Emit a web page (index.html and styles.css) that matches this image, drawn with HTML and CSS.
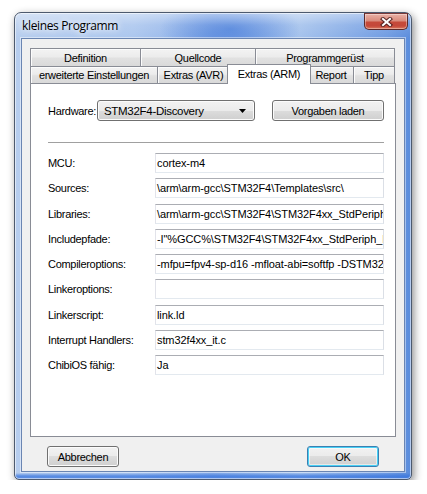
FILE: index.html
```html
<!DOCTYPE html>
<html lang="de">
<head>
<meta charset="utf-8">
<title>kleines Programm</title>
<link rel="stylesheet" href="styles.css">
</head>
<body>
<div class="window">
  <div class="titlebar">
    <span class="title">kleines Programm</span>
    <button class="close" aria-label="Schließen">
      <svg width="13" height="10" viewBox="0 0 13 10">
        <path d="M3 2 L10 8 M10 2 L3 8" stroke="#4a1c1c" stroke-width="4.2" stroke-linecap="square" fill="none" opacity="0.85"/>
        <path d="M3 2 L10 8 M10 2 L3 8" stroke="#fff" stroke-width="2" stroke-linecap="square" fill="none"/>
      </svg>
    </button>
  </div>

  <div class="client">
    <div class="tabctl">
      <div class="tabrow row1">
        <div class="tab t-def">Definition</div>
        <div class="tab t-src">Quellcode</div>
        <div class="tab t-prog">Programmgerüst</div>
      </div>
      <div class="tabrow row2">
        <div class="tab t-ext">erweiterte Einstellungen</div>
        <div class="tab t-avr">Extras (AVR)</div>
        <div class="tab t-arm active">Extras (ARM)</div>
        <div class="tab t-rep">Report</div>
        <div class="tab t-tip">Tipp</div>
      </div>

      <div class="panel">
        <div class="hwrow">
          <span class="hwlabel">Hardware:</span>
          <div class="combo">
            <span>STM32F4-Discovery</span>
            <svg width="7" height="4" viewBox="0 0 7 4"><polygon points="0,0 7,0 3.5,4" fill="#000"/></svg>
          </div>
          <button class="btn btn-load">Vorgaben laden</button>
        </div>

        <div class="sep"></div>

        <div class="fields">
          <div class="field"><span class="flabel">MCU:</span><div class="tbox">cortex-m4</div></div>
          <div class="field"><span class="flabel">Sources:</span><div class="tbox">\arm\arm-gcc\STM32F4\Templates\src\</div></div>
          <div class="field"><span class="flabel">Libraries:</span><div class="tbox">\arm\arm-gcc\STM32F4\STM32F4xx_StdPeriph</div></div>
          <div class="field"><span class="flabel">Includepfade:</span><div class="tbox">-I"%GCC%\STM32F4\STM32F4xx_StdPeriph_D</div></div>
          <div class="field"><span class="flabel">Compileroptions:</span><div class="tbox">-mfpu=fpv4-sp-d16 -mfloat-abi=softfp -DSTM32F</div></div>
          <div class="field"><span class="flabel">Linkeroptions:</span><div class="tbox"></div></div>
          <div class="field"><span class="flabel">Linkerscript:</span><div class="tbox">link.ld</div></div>
          <div class="field"><span class="flabel">Interrupt Handlers:</span><div class="tbox">stm32f4xx_it.c</div></div>
          <div class="field"><span class="flabel">ChibiOS fähig:</span><div class="tbox">Ja</div></div>
        </div>
      </div>
    </div>

    <div class="actions">
      <button class="btn">Abbrechen</button>
      <button class="btn default">OK</button>
    </div>
  </div>
</div>
</body>
</html>
```

FILE: styles.css
```css
html, body {
  margin: 0;
  background: #ffffff;
}

body {
  padding: 12px 0 0 14px;
  font-family: "Liberation Sans", Arial, sans-serif;
  font-size: 11px;
  letter-spacing: -0.3px;
  color: #000;
}

/* ---------- window frame (Aero glass) ---------- */
.window {
  box-sizing: border-box;
  width: 398px;
  height: 468px;
  border: 1px solid #4d5a6e;
  border-radius: 7px 7px 5px 5px;
  display: flex;
  flex-direction: column;
  background:
    linear-gradient(180deg, rgba(255,255,255,0.45) 0px, rgba(255,255,255,0.12) 12px, rgba(255,255,255,0) 26px),
    linear-gradient(0deg, rgba(58,118,222,0.75) 0px, rgba(58,118,222,0.75) 3px, rgba(58,118,222,0) 6px),
    radial-gradient(ellipse 70px 30px at 215px 16px, rgba(72,125,218,0.85), rgba(72,125,218,0)),
    linear-gradient(90deg, #b6cdee 0%, #abc6ee 30%, #86abe7 50%, #a3c1ec 72%, #6f9be2 94%, #5a8cdc 100%);
  box-shadow: 2px 3px 9px rgba(0,0,0,0.45), inset 0 0 0 1px rgba(255,255,255,0.55);
}

.titlebar {
  height: 25px;
  display: flex;
  align-items: flex-start;
  justify-content: space-between;
  padding-left: 7px;
  padding-right: 3px;
}

.title {
  align-self: center;
  font-family: "Open Sans", "Noto Sans", sans-serif;
  font-size: 12px;
  letter-spacing: -0.35px;
  color: #000;
  text-shadow: 0 0 6px #fff, 0 0 8px rgba(255,255,255,0.9);
}

.close {
  box-sizing: border-box;
  width: 44px;
  height: 17px;
  margin: 0;
  padding: 0;
  border: 1px solid #5b2a2a;
  border-top-color: #7a3a3a;
  border-radius: 0 0 5px 5px;
  background: linear-gradient(180deg, #eab1a6 0%, #d98b7c 45%, #c54a3a 55%, #c4483a 80%, #db7a5e 100%);
  box-shadow: inset 0 0 0 1px rgba(255,255,255,0.35);
  display: flex;
  align-items: center;
  justify-content: center;
}

/* ---------- client area ---------- */
.client {
  box-sizing: border-box;
  margin: 0 6px;
  height: 434px;
  border: 1px solid #6a85b2;
  background: #f0f0f0;
  box-shadow: 0 0 0 1px rgba(255,255,255,0.45);
  display: flex;
  flex-direction: column;
}

.tabctl {
  margin: 9px 8px 0;
  width: 366px;
  display: flex;
  flex-direction: column;
}

.tabrow {
  display: flex;
}

.row1 { height: 18px; }
.row2 { height: 17px; }

.tab {
  box-sizing: border-box;
  height: 100%;
  margin-left: -1px;
  border: 1px solid #898c95;
  border-bottom: none;
  background: linear-gradient(180deg, #f3f3f3 0%, #ececec 45%, #e1e1e1 55%, #d9d9d9 100%);
  box-shadow: inset 1px 1px 0 #fcfcfc;
  display: flex;
  align-items: center;
  justify-content: center;
  white-space: nowrap;
  z-index: 1;
}

.tabrow .tab:first-child { margin-left: 0; }

.t-def  { width: 111px; }
.t-src  { width: 116px; }
.t-prog { width: 140px; }
.t-ext  { width: 128px; }
.t-avr  { width: 73px; }
.t-rep  { width: 46px; }
.t-tip  { width: 42px; }

.tab.active {
  width: 84px;
  height: 20px;
  margin: -2px -2px -1px -3px;
  background: #fff;
  box-shadow: none;
  padding-bottom: 2px;
  z-index: 2;
}

.panel {
  box-sizing: border-box;
  height: 354px;
  border: 1px solid #898c95;
  background: #fff;
  padding: 16px 0 0 17px;
}

/* hardware selection */
.hwrow {
  display: flex;
  align-items: center;
  height: 21px;
}

.hwlabel { width: 49px; }

.combo {
  box-sizing: border-box;
  width: 158px;
  height: 21px;
  border: 1px solid #707070;
  border-radius: 3px;
  background: linear-gradient(180deg, #f2f2f2 0%, #ebebeb 50%, #dddddd 50%, #cfcfcf 100%);
  box-shadow: inset 0 0 0 1px #fbfbfb;
  display: flex;
  align-items: center;
  justify-content: space-between;
  padding: 0 8px 0 6px;
  font-size: 11.5px;
  letter-spacing: -0.3px;
}

.combo svg { display: block; }

.btn {
  box-sizing: border-box;
  width: 72px;
  height: 21px;
  margin: 0;
  padding: 0;
  border: 1px solid #707070;
  border-radius: 3px;
  background: linear-gradient(180deg, #f2f2f2 0%, #ebebeb 50%, #dddddd 50%, #cfcfcf 100%);
  box-shadow: inset 0 0 0 1px #fbfbfb;
  font: inherit;
  letter-spacing: inherit;
  color: #000;
}

.btn-load {
  width: 112px;
  margin-left: 17px;
}

.btn.default {
  border-color: #3c7fb1;
  box-shadow: inset 0 0 0 1px #48d0f5, inset 0 0 0 2px rgba(255,255,255,0.5);
}

.sep {
  width: 336px;
  height: 1px;
  margin-top: 21px;
  background: #a0a0a0;
}

/* property rows */
.fields {
  margin-top: 10px;
  display: flex;
  flex-direction: column;
  gap: 5.25px;
}

.field {
  display: flex;
  align-items: center;
  height: 20px;
}

.flabel { width: 107px; white-space: nowrap; }

.tbox {
  box-sizing: border-box;
  width: 229px;
  height: 20px;
  border: 1px solid;
  border-color: #abadb3 #dbdfe6 #e3e9ef #e2e3ea;
  background: #fff;
  padding: 0 1px;
  line-height: 18px;
  letter-spacing: -0.1px;
  white-space: nowrap;
  overflow: hidden;
}

/* dialog buttons */
.actions {
  display: flex;
  justify-content: space-between;
  margin: 9px 25px 0;
}
```
